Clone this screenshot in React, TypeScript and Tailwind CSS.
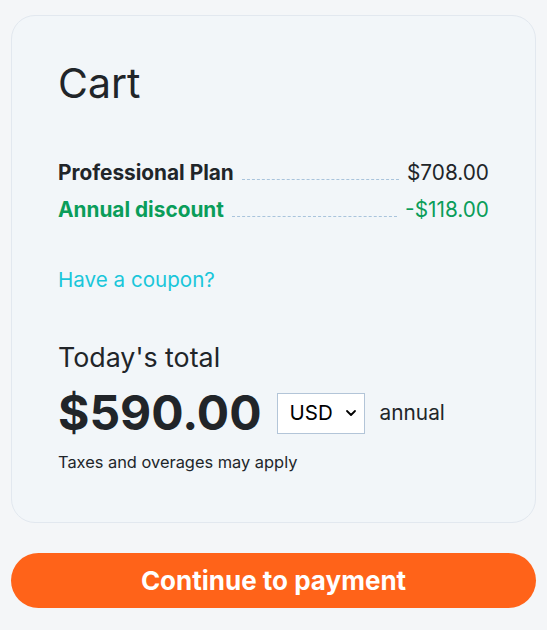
export default function App() {
  return (
    <div className="min-h-[630px] w-[547px] bg-[#f4f6f8] px-[11px] pt-[15px]" style={{ fontFamily: "Inter, 'Noto Sans', sans-serif" }}>
      <div className="rounded-[24px] border border-[#e2e8ef] bg-[#f2f6f9] px-[46px] pt-[41px] pb-[50px]">
        <h1 className="text-[41px] leading-[52px] text-[#212529]">Cart</h1>
        <div className="mt-[49px] flex flex-col gap-[7px]">
          <div className="flex items-baseline text-[20.8px] leading-[30px]">
            <span className="font-bold text-[#212529]">Professional Plan</span>
            <span className="mx-[8px] flex-1 border-b border-dashed border-[#a9c4dc]" />
            <span className="text-[#212529]">$708.00</span>
          </div>
          <div className="flex items-baseline text-[20.8px] leading-[30px] text-[#0a9d5a]">
            <span className="font-bold">Annual discount</span>
            <span className="mx-[8px] flex-1 border-b border-dashed border-[#a9c4dc]" />
            <span>-$118.00</span>
          </div>
        </div>
        <div className="mt-[41px] text-[20.6px] leading-[28px] text-[#1ac6da]">Have a coupon?</div>
        <div className="mt-[47px] text-[26.8px] leading-[32px] text-[#212529]">Today's total</div>
        <div className="mt-[10px] flex items-center">
          <span className="text-[48px] font-bold leading-[60px] text-[#212529]">$590.00</span>
          <div className="relative ml-[15px] h-[41px] w-[88px]">
            <select className="h-full w-full appearance-none border border-[#b3c5d8] bg-white pl-[12px] text-[20.5px] text-black" defaultValue="USD">
              <option>USD</option>
            </select>
            <svg className="pointer-events-none absolute right-[8px] top-[16px]" width="12" height="8" viewBox="0 0 12 8" fill="none">
              <path d="M2 2l4 4 4-4" stroke="#000" strokeWidth="1.8" strokeLinecap="round" strokeLinejoin="round" />
            </svg>
          </div>
          <span className="ml-[15px] text-[20.8px] text-[#212529]">annual</span>
        </div>
        <div className="mt-[9px] text-[16.4px] leading-[20px] text-[#212529]">Taxes and overages may apply</div>
      </div>
      <button className="mt-[30px] h-[55px] w-full rounded-full bg-[#ff6319] text-[26px] font-bold text-white">Continue to payment</button>
    </div>
  );
}
